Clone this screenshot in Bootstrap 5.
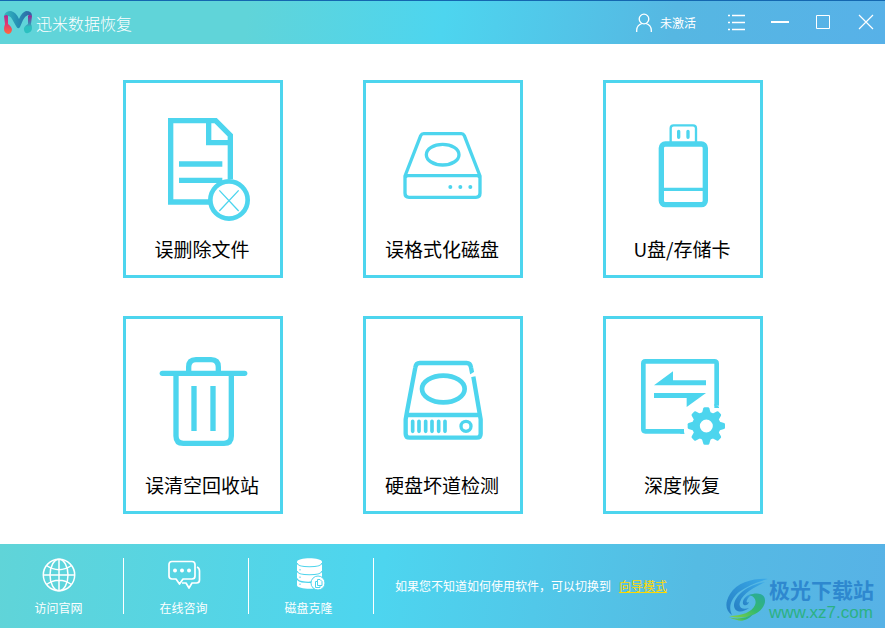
<!DOCTYPE html>
<html lang="zh-CN">
<head>
<meta charset="utf-8">
<meta name="viewport" content="width=device-width, initial-scale=1">
<title>迅米数据恢复</title>
<link href="https://cdn.jsdelivr.net/npm/bootstrap@5.3.0/dist/css/bootstrap.min.css" rel="stylesheet">
<style>
  body {
    font-family: "Noto Sans CJK SC", sans-serif;
    font-size: 12px;
    line-height: 18px;
  }
  button { font: inherit; }
  svg { display: block; fill: none; }
  .title-bar {
    height: 44px; border-top: 1px solid #1467b0; padding: 0 9px 0 4px;
    background: linear-gradient(98deg, #60d4d9 0%, #60d4d9 28%, #4dd5ef 50%, #56b7e2 76%, #57b1e8 100%);
  }
  .app-name { font-size: 16px; line-height: 24px; font-weight: 300; }
  .plain-btn { background: none; border: 0; padding: 0; color: #fff; }
  .window-tools { gap: 23px; margin-left: 31px; }
  .work-area { padding-top: 6px; }
  .task-grid { display: grid; grid-template-columns: repeat(3, 160px); gap: 38px 80px; }
  .task-tile { background: #fff; border: 3px solid #4dd5ee; padding: 0 1px 12px 0; color: #000; }
  .task-tile svg { width: 154px; height: 150px; stroke: #4dd5ee; }
  .task-tile .solid { fill: #4dd5ee; stroke: none; }
  .task-name { display: block; font-size: 19px; line-height: 28px; margin-top: 2px; }
  .bottom-bar {
    height: 84px;
    background: linear-gradient(98deg, #60d4d8 0%, #4dd5ef 43%, #55bbe3 78%, #57b2e6 100%);
  }
  .service-list { margin-left: -1px; }
  .service-link { width: 125px; height: 56px; border-right: 1px solid #fff; padding-right: 5px; line-height: 12px; color: #fff; text-decoration: none; }
  .service-link svg { stroke: #fff; }
  .hint { margin-left: 21px; }
  .mode-link { color: #ffd800; margin-left: 8px; }
  .site-mark { padding: 27px 11px 0 0; gap: 1px; }
  .site-name { color: #2e88cf; font-size: 21px; line-height: 24px; font-weight: 700; }
  .site-url { color: #2bb184; font: 17px/18px "Liberation Sans", sans-serif; margin-top: 3px; }
</style>
<script src="https://cdn.jsdelivr.net/npm/bootstrap@5.3.0/dist/js/bootstrap.bundle.min.js"></script>
</head>
<body class="min-vh-100 d-flex flex-column">

<header class="title-bar d-flex align-items-center text-white">
  <svg width="28" height="24" viewBox="0 0 28 24" aria-hidden="true">
    <defs>
      <linearGradient id="legL" x1="0" y1="0" x2="0" y2="1"><stop offset="0" stop-color="#b02a90"/><stop offset=".5" stop-color="#e23a70"/><stop offset="1" stop-color="#ff6a3c"/></linearGradient>
      <linearGradient id="legR" x1="0" y1="0" x2="0" y2="1"><stop offset="0" stop-color="#a0208c"/><stop offset=".4" stop-color="#4a78b0"/><stop offset=".65" stop-color="#2cc0c0"/></linearGradient>
      <linearGradient id="arch" x1="0" y1="0" x2="1" y2="0"><stop offset="0" stop-color="#35b9bd"/><stop offset=".5" stop-color="#258fb4"/><stop offset="1" stop-color="#3260a4"/></linearGradient>
    </defs>
    <path fill="url(#arch)" d="M0 5Q1 0 7 0Q12 1 15 8Q18 1 22 0Q28 0 28 5L24 4Q21 5 19 9L16 16Q14 19 12 15L8 8Q6 4 0 5Z"/>
    <path fill="url(#legL)" d="M0 5Q3 3 4 5L4 13Q8 16 8 19Q7 23 4 23Q0 22 0 18Q0 16 1 13Z"/>
    <path fill="url(#legR)" d="M28 5Q25 3 24 5L24 13Q19 16 20 19Q21 23 24 22Q28 21 28 17Q28 15 27 13Z"/>
  </svg>
  <span class="app-name ms-1">迅米数据恢复</span>
  <button type="button" class="plain-btn d-flex align-items-center gap-2 ms-auto">
    <svg width="16" height="20" viewBox="0 0 16 20" stroke="#fff" stroke-width="1.3" aria-hidden="true"><circle cx="8" cy="6" r="4.8"/><path d="M.7 19V17Q1 12 6 10.500M15.300 19V17Q15 12 10 10.500"/></svg>
    <span>未激活</span>
  </button>
  <div class="window-tools d-flex">
    <button type="button" class="plain-btn" aria-label="菜单"><svg width="20" height="20" viewBox="0 0 20 20" stroke="#fff" stroke-width="1.6"><path d="M5 2.500H18M5 9.500H18M5 16.500H18M1 2.500H3M1 9.500H3M1 16.500H3"/></svg></button>
    <button type="button" class="plain-btn" aria-label="最小化"><svg width="20" height="20" viewBox="0 0 20 20" stroke="#fff" stroke-width="2"><path d="M1 9H19"/></svg></button>
    <button type="button" class="plain-btn" aria-label="最大化"><svg width="20" height="20" viewBox="0 0 20 20" stroke="#fff"><path d="M3.500 2.500H16.500V15.500H3.500Z"/></svg></button>
    <button type="button" class="plain-btn" aria-label="关闭"><svg width="20" height="20" viewBox="0 0 20 20" stroke="#fff" stroke-width="1.2"><path d="M3 2L17 16M17 2L3 16"/></svg></button>
  </div>
</header>

<main class="work-area bg-white flex-grow-1 d-flex justify-content-center align-items-center">
  <div class="task-grid">
    <button type="button" class="task-tile">
      <svg viewBox="18 21 462 450" stroke-width="16" aria-hidden="true">
        <path d="M268 378H152V134H287L331 178V310M266 134V200H331"/>
        <path d="M177 264H307M177 313H307"/>
        <circle cx="327" cy="372" r="56" fill="#fff" stroke-width="14"/>
        <path d="M298 343L356 405M356 343L298 405" stroke-width="4"/>
      </svg>
      <span class="task-name">误删除文件</span>
    </button>
    <button type="button" class="task-tile">
      <svg viewBox="18 21 462 450" stroke-width="10" aria-hidden="true">
        <path d="M135 300L182 179Q185 173 191 173H304Q310 173 313 179L360 300V352Q360 364 348 364H147Q135 364 135 352ZM135 306Q136 299 145 299H350Q359 299 360 306"/>
        <ellipse cx="248" cy="236" rx="49" ry="31"/>
        <g class="solid"><circle cx="271" cy="333" r="6"/><circle cx="301" cy="333" r="6"/><circle cx="331" cy="333" r="6"/></g>
      </svg>
      <span class="task-name">误格式化磁盘</span>
    </button>
    <button type="button" class="task-tile">
      <svg viewBox="18 21 462 450" stroke-width="16" aria-hidden="true">
        <rect x="184" y="204" width="132" height="182" rx="12"/>
        <path d="M190 340H310" stroke-width="10"/>
        <path d="M212 198V157Q212 148 221 148H279Q288 148 288 157V198" stroke-width="7"/>
        <path d="M236 166V184M264 166V184" stroke-width="10" stroke-linecap="round"/>
      </svg>
      <span class="task-name">U盘/存储卡</span>
    </button>
    <button type="button" class="task-tile">
      <svg viewBox="18 21 462 450" stroke-width="16" aria-hidden="true">
        <path d="M127 184H374" stroke-linecap="round"/>
        <path d="M206 184V165Q206 143 228 143H273Q295 143 295 165V184"/>
        <path d="M168 184V372Q168 394 190 394H312Q334 394 334 372V184"/>
        <path d="M222 222V357M279 222V357"/>
      </svg>
      <span class="task-name">误清空回收站</span>
    </button>
    <button type="button" class="task-tile">
      <svg viewBox="18 21 462 450" stroke-width="13" aria-hidden="true">
        <path d="M337 187L333 166Q331 153 320 153H179Q168 153 166 166L141 299L137 322V365Q137 377 149 377H350Q362 377 362 365V322L340 194M140 309H360"/>
        <path d="M326 195L350 180" stroke="#fff" stroke-width="8"/>
        <ellipse cx="250" cy="231" rx="64" ry="40" stroke-width="14"/>
        <path d="M158 328V358M177 328V358M197 328V358M216 328V358M236 328V358M255 328V358" stroke-width="11" stroke-linecap="round"/>
        <circle cx="318" cy="343" r="15" stroke-width="10"/>
      </svg>
      <span class="task-name">硬盘坏道检测</span>
    </button>
    <button type="button" class="task-tile">
      <svg viewBox="18 21 462 450" stroke-width="14" aria-hidden="true">
        <path d="M350 281V155Q350 148 343 148H136Q130 148 130 155V351Q130 358 136 358H252"/>
        <path class="solid" d="M162 220L219 178V205H318V220ZM318 243L260 285V258H162V243ZM343 276L357 284V288H343ZM248 351L254 365H240Z"/>
        <circle cx="319" cy="342" r="31" stroke-width="23"/>
        <g class="solid">
          <path id="tooth" d="M305 306L310 289Q311 286 314 286H324Q327 286 328 289L333 306Z"/>
          <use href="#tooth" transform="rotate(45 319 342)"/><use href="#tooth" transform="rotate(90 319 342)"/>
          <use href="#tooth" transform="rotate(135 319 342)"/><use href="#tooth" transform="rotate(180 319 342)"/>
          <use href="#tooth" transform="rotate(225 319 342)"/><use href="#tooth" transform="rotate(270 319 342)"/>
          <use href="#tooth" transform="rotate(315 319 342)"/>
        </g>
      </svg>
      <span class="task-name">深度恢复</span>
    </button>
  </div>
</main>

<footer class="bottom-bar d-flex align-items-center text-white">
  <nav class="service-list d-flex flex-shrink-0">
    <a href="#" class="service-link d-flex flex-column align-items-center justify-content-between">
      <svg width="34" height="34" viewBox="0 0 34 34" stroke-width="1.500" aria-hidden="true"><circle cx="17" cy="17" r="15.700"/><ellipse cx="17" cy="17" rx="9" ry="15.700"/><path d="M17 1V33M1 17H33M4.500 7.500Q17 16 29.500 7.500M4.500 26.500Q17 18 29.500 26.500"/></svg>
      <span>访问官网</span>
    </a>
    <a href="#" class="service-link d-flex flex-column align-items-center justify-content-between">
      <svg width="34" height="34" viewBox="0 0 34 34" stroke-width="1.700" stroke-linejoin="round" aria-hidden="true"><path d="M5 3.500H25Q28 3.500 28 6.500V18Q28 21 25 21H16L12.500 26L9 21H5Q2 21 2 18V6.500Q2 3.500 5 3.500ZM30 9Q32.500 10 32.500 13V22Q32.500 25 29.500 25H25L22 30L19 25H15"/><g fill="#fff" stroke="none"><circle cx="8" cy="12.500" r="2"/><circle cx="15" cy="12.500" r="2"/><circle cx="22" cy="12.500" r="2"/></g></svg>
      <span>在线咨询</span>
    </a>
    <a href="#" class="service-link d-flex flex-column align-items-center justify-content-between">
      <svg width="34" height="34" viewBox="-1 1 34 34" aria-hidden="true">
        <path fill="#fff" stroke="none" d="M4 5C4 0 29 0 29 5V28C29 33 4 33 4 28Z"/>
        <path stroke="#4fd4ec" stroke-width="1.200" d="M4 6C5 11 28 11 29 6M4 14C5 19 28 19 29 14M4 21.500C5 26 19 26 21 24"/>
        <path stroke="#4fd4ec" d="M7 12V13.500M7 19.500V21M7 26.500V28"/>
        <circle cx="25" cy="26" r="7" fill="#fff" stroke="#4fd4ec"/>
        <path stroke="#4fd4ec" d="M24.500 22.500H27L29 24.500V28.500H24.500ZM24 24.500H22.500V30.500H27V29"/>
      </svg>
      <span>磁盘克隆</span>
    </a>
  </nav>
  <p class="hint mb-0">如果您不知道如何使用软件，可以切换到<a href="#" class="mode-link">向导模式</a></p>
  <div class="site-mark d-flex align-items-center ms-auto flex-shrink-0">
    <svg width="43" height="43" viewBox="0 0 43 43" aria-hidden="true">
      <defs>
        <linearGradient id="swirlB" x1="0" y1="1" x2="1" y2="0"><stop offset="0" stop-color="#267fc4"/><stop offset="1" stop-color="#3aaae8"/></linearGradient>
        <linearGradient id="swirlG" x1="0" y1="1" x2="1" y2="0"><stop offset="0" stop-color="#8bd43c"/><stop offset=".5" stop-color="#35b96e"/><stop offset="1" stop-color="#28a8a0"/></linearGradient>
      </defs>
      <path fill="url(#swirlB)" d="M43 1C30 0 12 4 5 16C-1 26 1 33 7 37C3 29 6 21 14 14C22 8 32 4 43 1Z"/>
      <path fill="url(#swirlB)" d="M40 4C24 6 9 17 9 28C10 35 18 35 24 30C18 32 13 30 15 24C18 15 30 9 40 4Z"/>
      <path fill="url(#swirlB)" d="M29 16C22 16 17 21 18 26C20 29 24 26 24 24C22 25 21 24 22 22C23 19 26 17 29 16Z"/>
      <path fill="url(#swirlG)" d="M24 17C32 14 41 15 40 24C38 35 22 43 4 38C17 38 27 34 30 27C32 22 29 18 24 17Z"/>
      <path fill="url(#swirlG)" d="M3 39C12 42 22 40 28 36C24 42 16 44 12 42Q7 41 3 39Z"/>
    </svg>
    <div>
      <div class="site-name">极光下载站</div>
      <div class="site-url">www.xz7.com</div>
    </div>
  </div>
</footer>
</body>
</html>
